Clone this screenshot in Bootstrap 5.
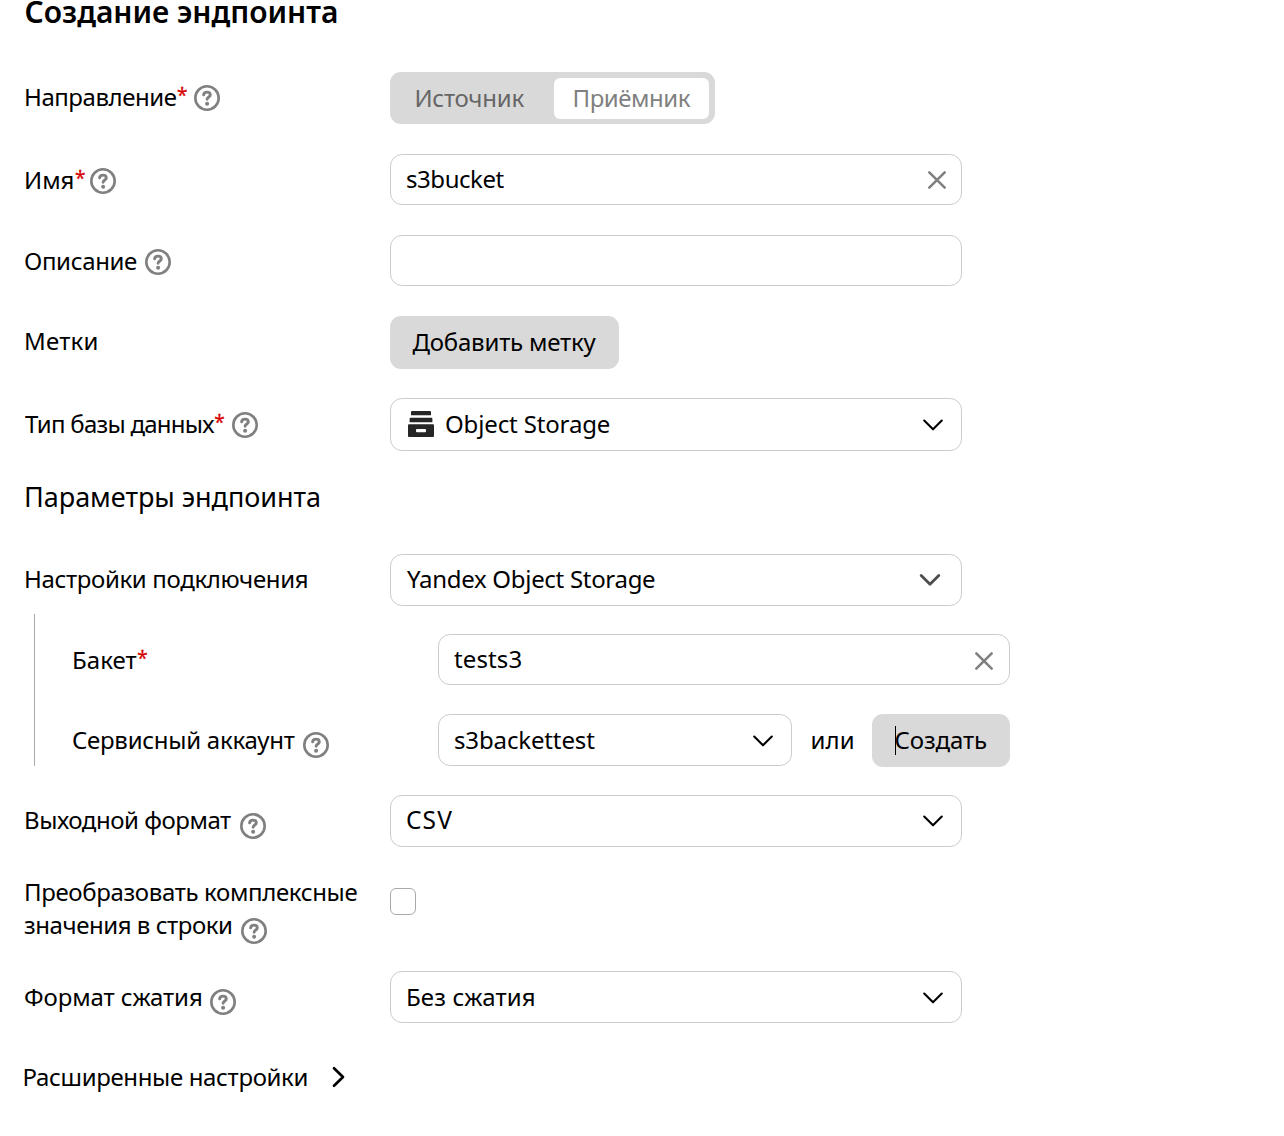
<!DOCTYPE html>
<html lang="ru">
<head>
<meta charset="utf-8">
<title>Создание эндпоинта</title>
<link rel="stylesheet" href="https://cdn.jsdelivr.net/npm/bootstrap@5.3.0/dist/css/bootstrap.min.css">
<style>
body{font-family:"Noto Sans",sans-serif;font-size:24px;line-height:33px;color:#000;background:#fff;letter-spacing:-.35px;overflow:hidden}
.endpoint-form{width:1010px;padding-left:24px}
.form-title{font-size:30px;line-height:23px;font-weight:600;letter-spacing:-.03px;margin:0 0 49px .5px}
.section-title{font-size:27px;line-height:34px;font-weight:400;letter-spacing:-.03px;margin:29px 0 40px}
.field-label{flex:0 0 366px;padding-top:9px;white-space:nowrap}
.lift{padding-top:8px}
.field-box{width:572px}
.g30{margin-top:30px}
.g29{margin-top:29px}
.tight{letter-spacing:-.45px}
.tighter{letter-spacing:-.75px;padding-left:1px}
.loose{letter-spacing:0}
.looser{letter-spacing:.2px}
.even{letter-spacing:.05px}
.soft{letter-spacing:-.2px}
.req{display:inline-block;width:11px;padding-left:.5px;font-size:19px;line-height:19px;vertical-align:4px;color:#d60000;letter-spacing:0;-webkit-text-stroke:.3px #d60000}
.help{width:26px;height:26px;vertical-align:-5px;margin-left:7px;fill:none;stroke:#808080}
.help-low{vertical-align:-9px;margin-left:8.5px}
.name-help{margin-left:4.5px}
.descr-help{margin-left:8.2px}
.out-help{vertical-align:-10px;margin-left:9px}
.conv-help{vertical-align:-10px;margin-left:8px}
.comp-help{margin-left:7.5px}
.ctl{height:52px;border:1px solid #ccc;border-radius:12px;background:#fff;padding:0 15px 2px;font-size:24px;line-height:33px;color:#000;text-align:left;letter-spacing:inherit}
.ctl.even{letter-spacing:.12px}
.ctl.tight{letter-spacing:-.45px}
.ctl.soft{letter-spacing:-.14px}
.h51{height:51px}
.h53{height:53px}
.clear-x{width:20px;height:20px;stroke:#808080;stroke-width:2.6;fill:none;right:15px;top:16px;pointer-events:none}
.bucket-x{right:16px;top:17px}
.chev{width:22px;height:14px;stroke:#000;stroke-width:2.1;fill:none;margin:3px 2px 0 auto}
.chev-gray{margin-right:5px;stroke:#4d4d4d;stroke-width:2.8}
.gray-btn{height:53px;border:0;border-radius:11px;background:#d9d9d9;color:#000;font-size:24px;line-height:33px;padding:0 0 2px 22.5px;text-align:left;letter-spacing:-.2px}
.gray-btn:hover{background:#d0d0d0}
.tag-btn{width:229px}
.seg{width:325px;height:52px;border-radius:11px;background:#d9d9d9;padding:6px 6px 5px 0}
.seg .btn{border:0;font-size:24px;line-height:33px;letter-spacing:-.24px;text-align:left;color:#666;width:164px;padding:0 0 2px 24.4px}
.seg .btn.active{background:#fff;color:#808080;border-radius:6px;width:155px;letter-spacing:-.44px;padding-left:18.5px}
.storage-icon{margin:1px 10px 0 1px}
.yos{padding-left:16px;padding-bottom:3px;letter-spacing:-.3px}
.nested{margin:8px 0 0 10px;padding:20px 0 0 37px;border-left:1px solid #aaa}
.acc-row{height:52px}
.acc-row .field-label{letter-spacing:-.27px}
.acc{width:354px}
.or-word{padding:9px 0 0 18.5px;letter-spacing:.1px}
.create-btn{width:138px;letter-spacing:-.11px}
.create-btn::before{content:"";position:absolute;left:23px;top:12px;width:1px;height:29px;background:#000}
.format-select{padding-bottom:3px}
.csv{font-size:24.5px;letter-spacing:1.1px}
.check{width:26px;height:27px;border:1px solid #aaa;border-radius:7px;margin:22px 0 0}
.convert-row{margin-top:19px;height:76px}
.compress{letter-spacing:-.1px}
.more-row{margin:37px 0 0 -1.5px}
.more-arrow{margin:0 0 0 23.5px}
</style>
<script src="https://cdn.jsdelivr.net/npm/bootstrap@5.3.0/dist/js/bootstrap.bundle.min.js"></script>
</head>
<body>
<svg class="d-none">
  <symbol id="q" viewBox="0 0 26 26"><circle cx="13" cy="13" r="11.7" stroke-width="2.6"/><path d="M9.6 9.9C9.8 8.2 11.1 7.1 13 7.1C15 7.1 16.3 8.3 16.3 9.9C16.3 11.9 13.1 12.2 13.1 14.3" stroke-width="2.9" stroke-linecap="round"/><circle cx="13.1" cy="18.7" r="2" fill="#808080" stroke="none"/></symbol>
  <symbol id="x" viewBox="0 0 20 20"><path d="M2.3 2.3L17.7 17.7M17.7 2.3L2.3 17.7" stroke-linecap="round"/></symbol>
  <symbol id="v" viewBox="0 0 22 14"><path d="M2.2 2.6L11 11.3L19.8 2.6" stroke-linecap="round" stroke-linejoin="round"/></symbol>
</svg>
<main class="endpoint-form">
  <h1 class="form-title">Создание эндпоинта</h1>

  <div class="d-flex">
    <div class="field-label lift"><span class="tight">Направление</span><span class="req">*</span><svg class="help"><use href="#q"/></svg></div>
    <div class="seg d-flex" role="group"><button class="btn">Источник</button><button class="btn active">Приёмник</button></div>
  </div>

  <div class="d-flex g30">
    <div class="field-label"><span class="loose">Имя</span><span class="req">*</span><svg class="help name-help"><use href="#q"/></svg></div>
    <div class="field-box position-relative"><input class="form-control ctl h51 tight" value="s3bucket"><svg class="clear-x position-absolute"><use href="#x"/></svg></div>
  </div>

  <div class="d-flex g30">
    <label class="field-label">Описание<svg class="help descr-help"><use href="#q"/></svg></label>
    <div class="field-box"><input class="form-control ctl h51"></div>
  </div>

  <div class="d-flex g30">
    <div class="field-label lift looser">Метки</div>
    <button class="btn gray-btn tag-btn">Добавить метку</button>
  </div>

  <div class="d-flex g29">
    <div class="field-label"><span class="tighter">Тип базы данных</span><span class="req">*</span><svg class="help"><use href="#q"/></svg></div>
    <button class="btn ctl h53 field-box d-flex align-items-center soft">
      <svg class="storage-icon" width="28" height="28" viewBox="0 0 28 28" fill="#262626"><path d="M5 1h18a1 1 0 0 1 1 1v3.2H4V2a1 1 0 0 1 1-1zM3.6 7.8h20.8a1 1 0 0 1 1 1v3.5H2.6V8.8a1 1 0 0 1 1-1z"/><path fill-rule="evenodd" d="M2 14.2h24a1 1 0 0 1 1 1V26a1 1 0 0 1-1 1H2a1 1 0 0 1-1-1V15.200a1 1 0 0 1 1-1zM10 19a1 1 0 0 0-1 1v1.300a1 1 0 0 0 1 1h8a1 1 0 0 0 1-1V20a1 1 0 0 0-1-1z"/></svg>
      Object Storage<svg class="chev"><use href="#v"/></svg></button>
  </div>

  <h2 class="section-title">Параметры эндпоинта</h2>

  <div class="d-flex">
    <div class="field-label lift">Настройки подключения</div>
    <button class="btn ctl field-box d-flex align-items-center yos">Yandex Object Storage<svg class="chev chev-gray"><use href="#v"/></svg></button>
  </div>

  <div class="nested">
    <div class="d-flex">
      <div class="field-label"><span class="even">Бакет</span><span class="req">*</span></div>
      <div class="field-box position-relative"><input class="form-control ctl h51 even" value="tests3"><svg class="clear-x bucket-x position-absolute"><use href="#x"/></svg></div>
    </div>
    <div class="d-flex g29 acc-row">
      <div class="field-label">Сервисный аккаунт<svg class="help help-low"><use href="#q"/></svg></div>
      <div class="field-box d-flex">
        <button class="btn ctl acc d-flex align-items-center soft">s3backettest<svg class="chev"><use href="#v"/></svg></button>
        <span class="or-word">или</span>
        <button class="btn gray-btn create-btn position-relative ms-auto">Создать</button>
      </div>
    </div>
  </div>

  <div class="d-flex g29">
    <div class="field-label lift tight">Выходной формат<svg class="help out-help"><use href="#q"/></svg></div>
    <button class="btn ctl field-box format-select d-flex align-items-center"><span class="csv">CSV</span><svg class="chev"><use href="#v"/></svg></button>
  </div>

  <div class="d-flex convert-row">
    <div class="field-label">Преобразовать комплексные<br><span class="tight">значения в строки</span><svg class="help conv-help"><use href="#q"/></svg></div>
    <input type="checkbox" class="form-check-input check">
  </div>

  <div class="d-flex g29">
    <div class="field-label"><span class="compress">Формат сжатия</span><svg class="help help-low comp-help"><use href="#q"/></svg></div>
    <button class="btn ctl field-box d-flex align-items-center even">Без сжатия<svg class="chev"><use href="#v"/></svg></button>
  </div>

  <div class="d-flex align-items-center more-row">Расширенные настройки<svg class="more-arrow" width="14" height="22" viewBox="0 0 14 22" fill="none" stroke="#000" stroke-width="2.7"><path d="M2 2.2L11 11L2 19.8" stroke-linecap="round" stroke-linejoin="round"/></svg></div>
</main>
</body>
</html>
